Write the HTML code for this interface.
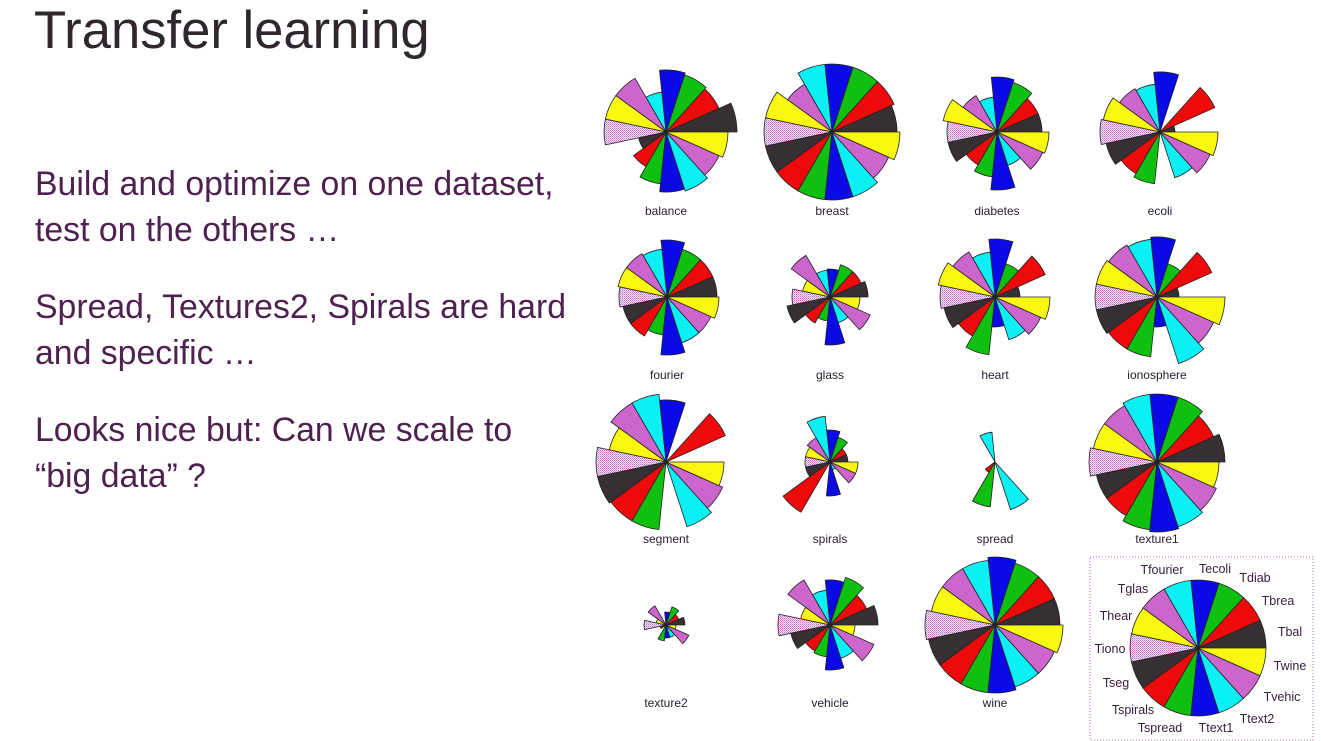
<!DOCTYPE html>
<html><head><meta charset="utf-8"><style>
html,body{margin:0;padding:0;background:#fff;width:1321px;height:741px;overflow:hidden}
.t{position:absolute;left:34px;top:0px;font:52.6px "Liberation Sans",sans-serif;color:#2e272e}
.b{position:absolute;left:35px;font:33.8px/46px "Liberation Sans",sans-serif;color:#4e2150}
svg{position:absolute;left:0;top:0}
</style></head><body>
<div class="t">Transfer learning</div>
<div class="b" style="top:161px">Build and optimize on one dataset,<br>test on the others …</div>
<div class="b" style="top:284px">Spread, Textures2, Spirals are hard<br>and specific …</div>
<div class="b" style="top:407px">Looks nice but: Can we scale to<br>“big data” ?</div>
<svg id="s" width="1321" height="741" xmlns="http://www.w3.org/2000/svg">
<defs><pattern id="p" width="2" height="2" patternUnits="userSpaceOnUse"><rect width="2" height="2" fill="#f4e8f4"/><rect width="1" height="1" fill="#c860c8"/><rect x="1" y="1" width="1" height="1" fill="#b0b0e0"/></pattern></defs>
<rect x="1090" y="557" width="223" height="183" fill="none" stroke="#c060c0" stroke-dasharray="1,2"/>
</svg>
<script>
var cols=["#363035","#ee0a0a","#10c010","#0a0ae6","#0af0f5","#cc66cc","#f8f810","url(#p)","#363035","#ee0a0a","#10c010","#0a0ae6","#0af0f5","#cc66cc","#f8f810"];
var P=[
[666,132,"balance",[71,58,60,62,40,62,62,62,28,40,52,60,62,58,62]],
[832,132,"breast",[65,68,68,68,68,55,68,68,68,68,68,68,68,62,68]],
[997,132,"diabetes",[45,45,52,55,35,42,55,50,50,38,45,58,35,50,52]],
[1160,132,"ecoli",[15,60,0,60,48,50,58,60,55,48,52,0,48,55,58]],
[667,297,"fourier",[50,50,50,57,48,50,50,48,45,45,38,58,48,48,52]],
[830,297,"glass",[38,34,34,28,27,48,28,38,44,30,24,48,27,44,30]],
[995,297,"heart",[25,55,35,58,45,52,58,55,52,45,58,30,45,50,55]],
[1157,297,"ionosphere",[22,60,35,60,58,60,62,62,62,60,60,30,70,62,68]],
[666,462,"segment",[0,65,0,62,68,68,58,70,70,68,68,0,68,62,58]],
[830,462,"spirals",[18,18,26,32,46,28,25,25,25,58,0,34,8,28,28]],
[995,462,"spread",[0,0,0,0,30,0,0,0,0,12,45,0,50,0,0]],
[1157,462,"texture1",[68,62,68,68,68,65,65,68,62,62,68,70,68,65,62]],
[666,625,"texture2",[19,14,19,13,0,22,10,22,6,0,16,13,13,25,10]],
[830,625,"vehicle",[48,40,50,45,35,52,30,52,40,30,32,45,35,48,25]],
[995,625,"wine",[65,65,65,68,65,65,65,70,68,68,68,68,65,65,68]],
[1198,648,"",[68,68,68,68,68,68,68,68,68,68,68,68,68,68,68]]];
var labY=[211,375,539,703];
var s=document.getElementById('s'),h='';
P.forEach(function(p,i){
 var cx=p[0],cy=p[1];
 p[3].forEach(function(r,k){
  if(r<=0)return;
  var a1=k*24*Math.PI/180,a2=(k+1)*24*Math.PI/180;
  var x1=cx+r*Math.cos(a1),y1=cy-r*Math.sin(a1),x2=cx+r*Math.cos(a2),y2=cy-r*Math.sin(a2);
  h+='<path d="M'+cx+' '+cy+'L'+x1.toFixed(1)+' '+y1.toFixed(1)+'A'+r+' '+r+' 0 0 0 '+x2.toFixed(1)+' '+y2.toFixed(1)+'Z" fill="'+cols[k]+'" stroke="#222" stroke-width="0.8"/>';
 });
 if(p[2])h+='<text x="'+cx+'" y="'+(labY[Math.floor(i/4)]+4)+'" text-anchor="middle" font-family="Liberation Sans,sans-serif" font-size="12" fill="#2a2030">'+p[2]+'</text>';
});
var L=[["Tecoli",1215,569],["Tdiab",1255,578],["Tbrea",1278,601],["Tbal",1290,632],["Twine",1290,666],["Tvehic",1282,697],["Ttext2",1257,719],["Ttext1",1216,728],["Tspread",1160,728],["Tspirals",1133,710],["Tseg",1116,683],["Tiono",1110,649],["Thear",1116,616],["Tglas",1133,589],["Tfourier",1162,570]];
L.forEach(function(l){h+='<text x="'+l[1]+'" y="'+(l[2]+4)+'" text-anchor="middle" font-family="Liberation Sans,sans-serif" font-size="12.5" fill="#3a2040">'+l[0]+'</text>';});
s.insertAdjacentHTML('beforeend',h);
</script>
</body></html>
